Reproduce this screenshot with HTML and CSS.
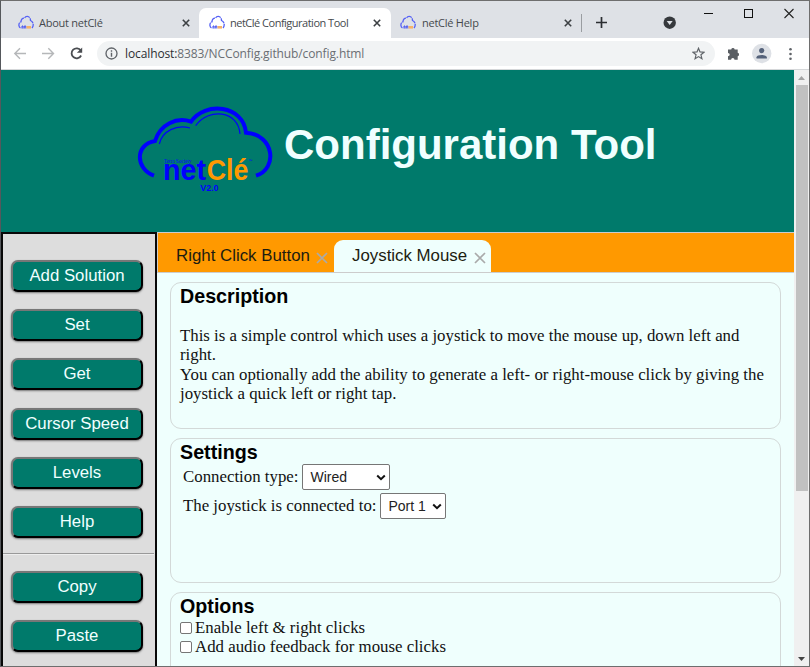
FILE: index.html
```html
<!DOCTYPE html>
<html lang="en">
<head>
<meta charset="utf-8">
<title>netClé Configuration Tool</title>
<link rel="stylesheet" href="styles.css">
</head>
<body>
<svg width="0" height="0" class="defs">
  <symbol id="fav" viewBox="0 0 16 16">
    <path d="M2.500 13C.3 12 .3 7.500 3 6.800C3 4 5 2.800 6.500 3.200C8 .2 12.500 1 12.500 5.500C15.800 7 15.800 11 14 13" fill="none" stroke="#5560f5" stroke-width="1.300" stroke-dasharray="6 .7"/>
    <path d="M4 13.500v-2.500h1v2.500M6.300 13.500v-2.500h1.500v2.500" fill="none" stroke="#4450f0" stroke-width="1"/>
    <path d="M8.500 12.300h4.500" fill="none" stroke="#f7b267" stroke-width="2.600"/>
  </symbol>
  <symbol id="x" viewBox="0 0 8 8"><path d="M.8.8L7.200 7.200M7.200.8L.8 7.200" fill="none" stroke="#3c4043" stroke-width="1.600"/></symbol>
</svg>
<div class="window">
  <div class="tabstrip">
    <div class="btab first"><svg class="fav"><use href="#fav"/></svg><span>About netClé</span><svg class="close"><use href="#x"/></svg></div>
    <div class="btab active"><svg class="fav"><use href="#fav"/></svg><span class="t2">netClé Configuration Tool</span><svg class="close"><use href="#x"/></svg></div>
    <div class="btab last"><svg class="fav"><use href="#fav"/></svg><span>netClé Help</span><svg class="close"><use href="#x"/></svg></div>
    <svg class="controls" width="228" height="37" viewBox="581 1 228 37">
      <path d="M581.500 14v18" stroke="#9a9da1"/>
      <path d="M596 22.500h11M601.500 17v11" stroke="#2b2e31" stroke-width="1.700"/>
      <circle cx="669.700" cy="22.700" r="6.200" fill="#36393d"/><path d="M666.700 21h6l-3 4z" fill="#dee1e6"/>
      <path d="M704 13.500h9" stroke="#111"/>
      <rect x="744.500" y="9.500" width="8" height="8" fill="none" stroke="#111"/>
      <path d="M784.500 9l9 9M793.500 9l-9 9" stroke="#222" stroke-width="1.100"/>
    </svg>
  </div>
  <div class="toolbar">
    <svg width="96" height="31" viewBox="1 38 96 31" fill="none">
      <path d="M26 53.500H15M20 48.300L14.800 53.500L20 58.700M42 53.500H53M48.300 48.300L53.500 53.500L48.300 58.700" stroke="#b5b7b9" stroke-width="1.400"/>
      <path d="M80.800 50.600A5 5 0 1 0 81.100 55.500" stroke="#4a4d51" stroke-width="1.800"/><path d="M82.200 47.500v5.300h-5.300z" fill="#4a4d51"/>
    </svg>
    <div class="omnibox">
      <svg width="13" height="13" viewBox="0 0 13 13"><circle cx="6.500" cy="6.500" r="5.500" fill="none" stroke="#5f6368" stroke-width="1.300"/><path d="M6.500 3.200v1.500M6.500 5.800v4" stroke="#5f6368" stroke-width="1.400"/></svg>
      <span class="url"><b>localhost:</b>8383/NCConfig.github/config.html</span>
      <svg class="star" width="13" height="13" viewBox="0 0 13 13"><path d="M6.500 1.300L8 4.900L12 5.200L8.950 7.800L9.900 11.700L6.500 9.600L3.100 11.700L4.050 7.800L1 5.200L5 4.900Z" fill="none" stroke="#5f6368" stroke-width="1.200"/></svg>
    </div>
    <svg width="94" height="31" viewBox="715 38 94 31">
      <path d="M728 49.500h3.200a1.800 1.800 0 0 1 3.500 0h3v3.200a1.800 1.800 0 0 1 0 3.500v3.500h-3.200a1.700 1.700 0 0 0-3.400 0H728v-3.400a1.700 1.700 0 0 0 0-3.400z" fill="#5a5e63"/>
      <circle cx="761.700" cy="53.500" r="9.700" fill="#dee1e6"/><circle cx="761.700" cy="50.600" r="2.600" fill="#55627a"/><path d="M756.500 58.600v-1.300c0-3.200 10.400-3.200 10.400 0v1.300z" fill="#55627a"/>
      <g fill="#5f6368"><circle cx="790.500" cy="49.200" r="1.300"/><circle cx="790.500" cy="54" r="1.300"/><circle cx="790.500" cy="58.800" r="1.300"/></g>
    </svg>
  </div>
  <div class="viewport">
    <div class="page">
      <header class="banner">
        <svg class="logo" width="150" height="105" viewBox="0 0 450 315">
          <g fill="none" stroke="#0000ff">
            <path d="M72 242C16 222 14 148 75 138C90 88 140 65 183 80C225 18 340 30 348 113C434 118 444 222 378 242" stroke-width="12"/>
            <path d="M88 147C97 107 140 88 180 99M197 92C235 38 325 45 330 117" stroke-width="3.500"/>
          </g>
          <g fill="#0000ff"><text x="102" y="203" class="soc" textLength="82" lengthAdjust="spacingAndGlyphs">Tetra Society</text>
          <text x="99" y="254" class="net" textLength="129" lengthAdjust="spacingAndGlyphs">net</text>
          <text x="211" y="287" class="ver" textLength="54" lengthAdjust="spacingAndGlyphs">V2.0</text><text x="355" y="201" class="tm">™</text></g>
          <text x="230" y="254" class="net cle" textLength="125" lengthAdjust="spacingAndGlyphs">Clé</text>
        </svg>
        <h1>Configuration Tool</h1>
      </header>
      <div class="columns">
        <nav class="sidebar">
          <button>Add Solution</button><button>Set</button><button>Get</button><button>Cursor Speed</button><button>Levels</button><button>Help</button>
          <hr>
          <button>Copy</button><button>Paste</button>
        </nav>
        <main>
          <div class="tabs">
            <div class="tab">Right Click Button<svg class="tx"><use href="#tx"/></svg></div>
            <div class="tab current">Joystick Mouse<svg class="tx"><use href="#tx"/></svg></div>
          </div>
          <section class="desc"><h2>Description</h2>
            <p><span>This is a simple control which uses a joystick to move the mouse up, down left and</span><br>right.<br><span>You can optionally add the ability to generate a left- or right-mouse click by giving the</span><br>joystick a quick left or right tap.</p>
          </section>
          <section class="settings"><h2>Settings</h2>
            <div class="row"><label>Connection type:</label><div class="select wired">Wired<svg class="chev" viewBox="0 0 10 7"><path d="M1.200 1.500L5 5.200L8.800 1.500"/></svg></div></div>
            <div class="row"><label>The joystick is connected to:</label><div class="select port">Port 1<svg class="chev" viewBox="0 0 10 7"><path d="M1.200 1.500L5 5.200L8.800 1.500"/></svg></div></div>
          </section>
          <section class="options"><h2>Options</h2>
            <label class="check"><i></i>Enable left &amp; right clicks</label>
            <label class="check"><i></i>Add audio feedback for mouse clicks</label>
          </section>
        </main>
      </div>
    </div>
    <div class="scrollbar">
      <svg width="14" height="15" viewBox="0 0 14 15"><path d="M4 10h7l-3.500-4z" fill="#a3a3a3"/></svg>
      <div class="thumb"></div>
      <svg class="down" width="14" height="15" viewBox="0 0 14 15"><path d="M4 6h7l-3.500 4z" fill="#444"/></svg>
    </div>
  </div>
</div>
<svg width="0" height="0" class="defs"><symbol id="tx" viewBox="0 0 12 12"><path d="M1 1L11 11M11 1L1 11" fill="none" stroke="#aaa" stroke-width="1.700"/></symbol></svg>
</body>
</html>
```
FILE: styles.css
```css
* { box-sizing: border-box; }
body { margin: 0; height: 667px; overflow: hidden; }
svg { display: block; flex: none; }
.defs { position: absolute; }
.window { width: 810px; height: 667px; border: 1px solid #6e6e6e; border-left-color: #55585c; display: flex; flex-direction: column; overflow: hidden; }
.tabstrip { height: 37px; flex: none; background: #dee1e6; display: flex; }
.btab { display: flex; align-items: center; font: 11px/16px "Open Sans", sans-serif; letter-spacing: -.25px; color: #45494d; white-space: nowrap; margin-top: 7px; height: 30px; padding: 0 13px 0 9px; }
.btab span { margin-top: -1px; }
.btab.first { width: 198px; padding-left: 17px; }
.btab.active { width: 192px; background: #fff; border-radius: 7px 7px 0 0; padding-left: 10px; }
.btab .t2 { letter-spacing: -.5px; }
.btab.last { width: 190px; padding-right: 9px; }
.fav { width: 16px; height: 16px; margin-right: 6px; }
.btab.first .fav, .btab.active .fav { margin-right: 5px; }
.close { width: 8px; height: 8px; margin-left: auto; }
.btab.first .close { margin-right: -4px; }
.btab.active .close { margin-right: -3px; }
.toolbar { height: 32px; flex: none; background: #fff; border-bottom: 1px solid #d5d7d9; display: flex; }
.omnibox { width: 618px; height: 25px; margin-top: 3px; border-radius: 13px; background: #f1f3f4; display: flex; align-items: center; padding: 0 10px 0 8px; }
.url { font: 12px "Open Sans", sans-serif; letter-spacing: -.11px; color: #6a6e73; margin-left: 7px; white-space: nowrap; }
.url b { font-weight: normal; color: #2c2f33; }
.star { margin-left: auto; }
.viewport { flex: 1; display: flex; min-height: 0; }
.page { width: 793px; background: #effffd; display: flex; flex-direction: column; overflow: hidden; }
.banner { height: 162px; flex: none; background: #007a6b; display: flex; padding: 25px 0 0 129px; }
.banner h1 { font: bold 42px/48px "Liberation Sans", sans-serif; color: #f0ffff; margin: 26px 0 0 4px; white-space: nowrap; }
.soc { font: 17px "Liberation Serif", serif; }
.net { font: bold 91px "Liberation Sans", sans-serif; }
.cle { fill: #ff9900; }
.ver { font: bold 25px "Liberation Sans", sans-serif; }
.tm { font: 12px "Liberation Sans", sans-serif; }
.columns { flex: 1; display: flex; min-height: 0; }
.sidebar { width: 156px; flex: none; background: #ddd; border: 2px solid #080808; border-bottom: 0; padding: 26px 0 0 8px; height: 450px; overflow: hidden; }
.sidebar button { display: block; width: 132px; height: 32px; margin: 0 0 17.200px; padding: 0; border: 2px outset #555; border-color: #777 #222 #222 #777; border-radius: 7px; background: #007a6b; color: #f0ffff; font: 16.800px "Liberation Sans", sans-serif; box-shadow: 0 1px 2px #777; }
.sidebar hr { border: 0; border-top: 1px solid #999; border-bottom: 1px solid #eee; height: 2px; margin: -2px 1px 16px -8px; }
main { flex: 1; display: flex; flex-direction: column; min-width: 0; }
.tabs { height: 41px; flex: none; background: #ff9900; border: 1px solid #ccc; border-right: 0; display: flex; padding-top: 7px; }
.tab { font: 16.850px/32px "Liberation Sans", sans-serif; color: #1c1c10; width: 176px; padding: 0 6px 0 18px; display: flex; justify-content: space-between; white-space: nowrap; }
.current { width: 157px; background: #effffd; border-radius: 9px 9px 0 0; padding-right: 5px; }
.tx { width: 12px; height: 12px; margin-top: 12px; }
section { width: 611px; margin: 0 0 9px 13px; border: 1px solid #d3d9d8; border-radius: 11px; padding: 2px 9px; flex: none; font: 16.830px/19.300px "Liberation Serif", serif; color: #111; white-space: nowrap; }
h2 { font: bold 19.700px/23px "Liberation Sans", sans-serif; color: #000; margin: 0; }
.desc { height: 147px; margin-top: 9px; }
.desc p { margin: 18px 0 0; }
.settings { height: 145px; }
.options { height: 140px; }
.row { display: flex; align-items: center; height: 26px; margin: 0 0 3px 3px; }
.select { font: 14px "Liberation Sans", sans-serif; height: 26px; border: 1px solid #767676; border-radius: 2px; background: #fff; color: #222; display: flex; align-items: center; justify-content: space-between; padding: 0 3px 0 7px; margin-left: 4px; }
.wired { width: 88px; }
.port { width: 66px; }
.chev { width: 10px; height: 7px; fill: none; stroke: #111; stroke-width: 2; }
.check { display: flex; align-items: center; height: 19px; }
.check i { width: 12px; height: 12px; border: 1px solid #767676; border-radius: 2px; background: #fff; margin-right: 3px; }
.scrollbar { width: 15px; background: #f0f0f0; display: flex; flex-direction: column; }
.thumb { width: 12px; height: 406px; margin-left: 2px; background: #c1c1c1; }
.down { margin-top: auto; }
```
